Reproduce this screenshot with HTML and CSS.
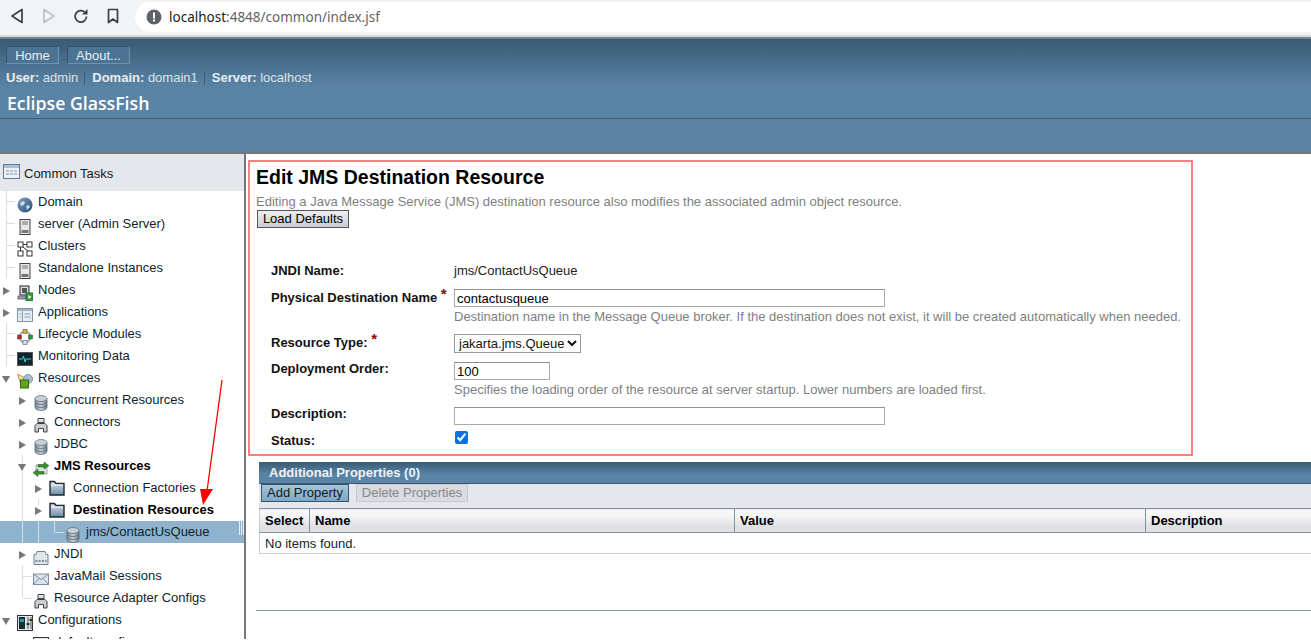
FILE: index.html
```html
<!DOCTYPE html>
<html lang="en">
<head>
  <meta charset="UTF-8">
  <title>Edit JMS Destination Resource</title>
  <link rel="stylesheet" href="styles.css">
</head>
<body>
  <svg class="defs" width="0" height="0">
    <defs>
      <linearGradient id="can" x1="0" x2="1" y1="0" y2="0"><stop offset="0" stop-color="#7d8c9c"/><stop offset=".5" stop-color="#c3ccd6"/><stop offset="1" stop-color="#6c7b8b"/></linearGradient>
      <linearGradient id="fold" x1="0" x2="0" y1="0" y2="1"><stop offset="0" stop-color="#dfe6ee"/><stop offset="1" stop-color="#6d8aa6"/></linearGradient>
      <linearGradient id="globe" x1="0" x2="1" y1="0" y2="1"><stop offset="0" stop-color="#7fa3c4"/><stop offset="1" stop-color="#234a72"/></linearGradient>
      <symbol id="i-globe" viewBox="0 0 16 16"><circle cx="8" cy="8" r="7.6" fill="url(#globe)"/><path d="M3 6l3-2 2 1-1 3-3 1zM9 9l3-1 1 2-3 3z" fill="#c7d8e8"/></symbol>
      <symbol id="i-server" viewBox="0 0 16 16"><rect x="3" y="0.5" width="10" height="15" fill="#e6e8ea" stroke="#444"/><path d="M5 3h6M5 5h6" stroke="#777"/><path d="M4.5 11h7v3h-7z" fill="#777"/></symbol>
      <symbol id="i-cluster" viewBox="0 0 16 16"><g fill="#fff" stroke="#333"><rect x="1" y="1" width="5" height="5"/><rect x="10" y="1" width="5" height="5"/><rect x="1" y="10" width="5" height="5"/><rect x="10" y="10" width="5" height="5"/></g><path d="M3.500 6v4M6 3.500h4M6 6l5 4" stroke="#333" fill="none"/></symbol>
      <symbol id="i-node" viewBox="0 0 16 16"><rect x="3" y="1" width="9" height="9" fill="#ddd" stroke="#222"/><rect x="5" y="3" width="5" height="5" fill="#555"/><rect x="1" y="11" width="8" height="3" fill="#a89cc0" stroke="#444" stroke-width=".7"/><rect x="9" y="8" width="7" height="8" fill="#3c9a3c" stroke="#174"/><path d="M11.500 10l3 2-3 2z" fill="#fff"/></symbol>
      <symbol id="i-apps" viewBox="0 0 16 16"><rect x="0.500" y="1.500" width="15" height="13" fill="#e8edf2" stroke="#8494a4"/><path d="M1 2h14v2H1z" fill="#9fb3c6"/><path d="M5.500 4v10M7.500 7h6M7.500 10h6M2.500 7h2M2.500 10h2" stroke="#8fa2b4"/></symbol>
      <symbol id="i-life" viewBox="0 0 16 16"><circle cx="8" cy="8" r="5.500" fill="none" stroke="#8a9aaa" stroke-width="1.400"/><rect x="6" y="0.500" width="4" height="4" fill="#eeaa22" stroke="#555" stroke-width=".6"/><rect x="0.500" y="6" width="4" height="4" fill="#cc2222" stroke="#555" stroke-width=".6"/><rect x="11.500" y="6" width="4" height="4" fill="#229933" stroke="#555" stroke-width=".6"/><rect x="6" y="11.500" width="4" height="4" fill="#dde4ee" stroke="#555" stroke-width=".6"/></symbol>
      <symbol id="i-monitor" viewBox="0 0 16 16"><rect x="0.500" y="1.500" width="15" height="13" fill="#10252c" stroke="#555"/><path d="M2 8h3.500l1-3 1.500 6 1-3h5" stroke="#39d8d8" fill="none"/></symbol>
      <symbol id="i-res" viewBox="0 0 16 16"><path d="M0.500 1l6 3 1 4-3 6z" fill="#f2d9a0" stroke="#c08a2a" stroke-width=".8"/><circle cx="11" cy="6" r="4.500" fill="#a9bccd" stroke="#6d8296" stroke-width=".8"/><rect x="3.500" y="7" width="8" height="8" fill="#62a020" stroke="#2f6a10"/></symbol>
      <symbol id="i-db" viewBox="0 0 16 16"><path d="M2 3.500v9c0 1.700 2.700 3 6 3s6-1.300 6-3v-9z" fill="url(#can)" stroke="#5d6b79" stroke-width=".7"/><path d="M2 6.500c0 1.700 2.700 3 6 3s6-1.300 6-3M2 9.500c0 1.700 2.700 3 6 3s6-1.300 6-3" fill="none" stroke="#55636f" stroke-width=".7"/><ellipse cx="8" cy="3.500" rx="6" ry="3" fill="#c6ced7" stroke="#5d6b79" stroke-width=".7"/></symbol>
      <symbol id="i-conn" viewBox="0 0 16 16"><path d="M5 1.500h6v4H5z" fill="#dfe4ea" stroke="#444"/><path d="M2 15V8.500l2-2h8l2 2V15h-3.500v-3.500h-5V15z" fill="#c6ced6" stroke="#444"/></symbol>
      <symbol id="i-jms" viewBox="0 0 16 16"><path d="M3 4h11v9H3z" fill="#dde3ea" stroke="#7b8a98" stroke-width=".7"/><path d="M5 3.500h6V1l5 3.700-5 3.300V6H5z" fill="#3c8f28" stroke="#1f5a14" stroke-width=".5"/><path d="M11 10.500H5V8l-5 3.700L5 15.500V13h6z" fill="#3c8f28" stroke="#1f5a14" stroke-width=".5"/></symbol>
      <symbol id="i-folder" viewBox="0 0 16 16"><path d="M1 1.500h4.500l1.500 2h8v11.500H1z" fill="url(#fold)" stroke="#1d2a36" stroke-width="1.400"/><path d="M2 5h12" stroke="#fff"/></symbol>
      <symbol id="i-jndi" viewBox="0 0 16 16"><path d="M4 2.500h8l1 3h2v10H1v-10h2z" fill="#e0e6ec" stroke="#6f7f8e"/><path d="M2.500 12h11" stroke="#7d8c9c" stroke-dasharray="2 1.200" stroke-width="2"/></symbol>
      <symbol id="i-mail" viewBox="0 0 16 16"><rect x="0.500" y="3" width="15" height="10.500" fill="#dce5ee" stroke="#7c8fa1"/><path d="M1 3.500l7 5 7-5M1 13l5-5.500M15 13l-5-5.500" fill="none" stroke="#7c8fa1"/></symbol>
      <symbol id="i-config" viewBox="0 0 16 16"><rect x="0.500" y="0.500" width="15" height="15" fill="#e4e6e8" stroke="#333"/><rect x="2" y="2" width="6" height="12" fill="#13303a"/><rect x="3" y="4" width="4" height="3" fill="#22a39a"/><path d="M11 2v12M14 2v12" stroke="#555"/><path d="M9.500 9h3M12.500 5h2.500" stroke="#333" stroke-width="2"/></symbol>
    </defs>
  </svg>

  <header class="browser-bar">
    <div class="nav-icons">
      <svg width="16" height="16" viewBox="0 0 16 16"><path d="M13 1.500v13L3 8z" fill="none" stroke="#3c4043" stroke-width="1.700" stroke-linejoin="round"/></svg>
      <svg width="16" height="16" viewBox="0 0 16 16"><path d="M3 1.500v13L13 8z" fill="none" stroke="#bdc1c6" stroke-width="1.700" stroke-linejoin="round"/></svg>
      <svg width="16" height="16" viewBox="0 0 16 16"><path d="M13.500 8.500a5.700 5.700 0 1 1-1.700-4.200" fill="none" stroke="#3c4043" stroke-width="1.700"/><path d="M14.500 1v5.500H9z" fill="#3c4043"/></svg>
      <svg width="16" height="16" viewBox="0 0 16 16"><path d="M3.500 1.500h9v13L8 11l-4.500 3.500z" fill="none" stroke="#3c4043" stroke-width="1.700" stroke-linejoin="round"/></svg>
    </div>
    <div class="url-box">
      <svg width="16" height="16" viewBox="0 0 16 16"><circle cx="8" cy="8" r="7.500" fill="#5f6368"/><path d="M7 3.500h2v6H7zM7 10.500h2v2H7z" fill="#fff"/></svg>
      <span class="url-host">localhost</span><span class="url-rest">:4848/common/index.jsf</span>
    </div>
  </header>

  <div class="masthead">
    <div class="mast-top">
      <div class="mast-nav">
        <button class="mast-btn mast-home">Home</button>
        <button class="mast-btn mast-about">About...</button>
      </div>
      <div class="mast-user">
        <span class="mast-item"><b>User:</b> admin</span>
        <span class="mast-item"><b>Domain:</b> domain1</span>
        <span class="mast-item"><b>Server:</b> localhost</span>
      </div>
      <div class="mast-title">Eclipse GlassFish</div>
    </div>
    <div class="mast-bottom"></div>
  </div>

  <div class="workspace">
    <nav class="sidebar">
      <div class="tasks-head">
        <svg width="17" height="15" viewBox="0 0 17 15"><rect x="0.500" y="0.500" width="16" height="14" fill="#eef2f6" stroke="#5f7d9a"/><path d="M1 1h15v3H1z" fill="#a9c0d6"/><path d="M3 7h3M7 7h3M11 7h3M3 10h3M7 10h3M11 10h3" stroke="#7d93a8"/></svg>
        Common Tasks
      </div>
      <ul class="tree">
        <li class="row lv1 vline1 stub"><svg class="ico"><use href="#i-globe"/></svg>Domain</li>
        <li class="row lv1 vline1 stub"><svg class="ico"><use href="#i-server"/></svg>server (Admin Server)</li>
        <li class="row lv1 vline1 stub"><svg class="ico"><use href="#i-cluster"/></svg>Clusters</li>
        <li class="row lv1 vline1 stub"><svg class="ico"><use href="#i-server"/></svg>Standalone Instances</li>
        <li class="row lv1"><i class="turner closed"></i><svg class="ico"><use href="#i-node"/></svg>Nodes</li>
        <li class="row lv1"><i class="turner closed"></i><svg class="ico"><use href="#i-apps"/></svg>Applications</li>
        <li class="row lv1 vline1 stub"><svg class="ico"><use href="#i-life"/></svg>Lifecycle Modules</li>
        <li class="row lv1 vline1 stub"><svg class="ico"><use href="#i-monitor"/></svg>Monitoring Data</li>
        <li class="row lv1"><i class="turner open"></i><svg class="ico"><use href="#i-res"/></svg>Resources</li>
        <li class="row lv2"><i class="turner closed"></i><svg class="ico"><use href="#i-db"/></svg>Concurrent Resources</li>
        <li class="row lv2"><i class="turner closed"></i><svg class="ico"><use href="#i-conn"/></svg>Connectors</li>
        <li class="row lv2"><i class="turner closed"></i><svg class="ico"><use href="#i-db"/></svg>JDBC</li>
        <li class="row lv2 vline2 bold"><i class="turner open"></i><svg class="ico"><use href="#i-jms"/></svg>JMS Resources</li>
        <li class="row lv3 vline2"><i class="turner closed"></i><svg class="ico ico-folder"><use href="#i-folder"/></svg>Connection Factories</li>
        <li class="row lv3 vline2 vline3 bold"><i class="turner closed"></i><svg class="ico ico-folder"><use href="#i-folder"/></svg>Destination Resources</li>
        <li class="row lv4 selected"><svg class="ico"><use href="#i-db"/></svg>jms/ContactUsQueue<span class="grip"></span></li>
        <li class="row lv2"><i class="turner closed"></i><svg class="ico"><use href="#i-jndi"/></svg>JNDI</li>
        <li class="row lv2 vline2 stub2"><svg class="ico"><use href="#i-mail"/></svg>JavaMail Sessions</li>
        <li class="row lv2 vline2 stub2 stub-end"><svg class="ico"><use href="#i-conn"/></svg>Resource Adapter Configs</li>
        <li class="row lv1"><i class="turner open"></i><svg class="ico"><use href="#i-config"/></svg>Configurations</li>
        <li class="row lv2"><i class="turner closed"></i><svg class="ico"><use href="#i-config"/></svg>default-config</li>
      </ul>
    </nav>

    <main class="content">
      <section class="edit-box">
        <h1>Edit JMS Destination Resource</h1>
        <p class="help page-help">Editing a Java Message Service (JMS) destination resource also modifies the associated admin object resource.</p>
        <button class="load-btn">Load Defaults</button>
        <div class="form">
          <div class="form-row row-jndi">
            <label>JNDI Name:</label>
            <div class="value">jms/ContactUsQueue</div>
          </div>
          <div class="form-row row-phys">
            <label>Physical Destination Name <span class="req">*</span></label>
            <div class="value">
              <input class="field wide" type="text" value="contactusqueue">
              <p class="help">Destination name in the Message Queue broker. If the destination does not exist, it will be created automatically when needed.</p>
            </div>
          </div>
          <div class="form-row row-type">
            <label>Resource Type: <span class="req">*</span></label>
            <div class="value">
              <select class="type-select"><option>jakarta.jms.Queue</option></select>
            </div>
          </div>
          <div class="form-row row-order">
            <label>Deployment Order:</label>
            <div class="value">
              <input class="field short" type="text" value="100">
              <p class="help">Specifies the loading order of the resource at server startup. Lower numbers are loaded first.</p>
            </div>
          </div>
          <div class="form-row row-desc">
            <label>Description:</label>
            <div class="value"><input class="field wide" type="text"></div>
          </div>
          <div class="form-row row-status">
            <label>Status:</label>
            <div class="value"><input class="status-check" type="checkbox" checked></div>
          </div>
        </div>
      </section>

      <section class="props">
        <div class="props-title">Additional Properties (0)</div>
        <div class="props-actions">
          <button class="add-btn">Add Property</button>
          <button class="del-btn" disabled>Delete Properties</button>
        </div>
        <table class="props-table">
          <colgroup>
            <col class="col-select"><col class="col-name"><col class="col-value"><col>
          </colgroup>
          <thead>
            <tr><th>Select</th><th>Name</th><th>Value</th><th>Description</th></tr>
          </thead>
          <tbody>
            <tr><td colspan="4">No items found.</td></tr>
          </tbody>
        </table>
      </section>
      <hr class="foot-rule">
    </main>
  </div>

  <svg class="annot" width="40" height="140" viewBox="0 0 40 140">
    <path d="M27 1L12 112" stroke="#f00" stroke-width="1.300" fill="none"/>
    <path d="M5 110h13L8 126z" fill="#f00"/>
  </svg>
</body>
</html>
```

FILE: styles.css
```css
* {
  box-sizing: border-box;
}
html, body {
  height: 100%;
}
body {
  margin: 0;
  overflow: hidden;
  background: #fff;
  color: #000;
  font-family: "Liberation Sans", Arial, sans-serif;
  font-size: 13px;
}
.defs {
  position: absolute;
}

/* browser chrome */
.browser-bar {
  display: flex;
  height: 37px;
  padding-top: 2px;
  background: #f1f3f4;
  border-bottom: 2px solid #d6d8da;
}
.nav-icons {
  display: flex;
  gap: 16px;
  width: 135px;
  padding: 6px 0 0 9px;
}
.url-box {
  display: flex;
  align-items: center;
  flex: 1;
  height: 30px;
  padding-left: 11px;
  background: #fff;
  border-radius: 15px 0 0 15px;
  font-family: "Noto Sans", sans-serif;
  font-size: 13.5px;
}
.url-box svg {
  margin-right: 7px;
}
.url-host {
  color: #202124;
}
.url-rest {
  color: #5f6368;
}

/* masthead */
.masthead {
  height: 115px;
  border-top: 2px solid #6f8596;
}
.mast-top {
  height: 80px;
  padding: 7px 6px 0;
  background: linear-gradient(#395b73, #5a84a6 62%);
  border-bottom: 1px solid #3c5b72;
}
.mast-bottom {
  height: 33px;
  background: #5a82a3;
}
.mast-nav {
  display: flex;
  gap: 8px;
}
.mast-btn {
  height: 18px;
  padding: 0;
  background: #4b7493;
  border: 1px solid #6f93ae;
  border-top-color: #34536b;
  border-left-color: #34536b;
  color: #e8eef3;
  font: 13px "Liberation Sans", Arial, sans-serif;
}
.mast-home {
  width: 53px;
}
.mast-about {
  width: 63px;
}
.mast-user {
  display: flex;
  margin-top: 5px;
  height: 17px;
  align-items: center;
  color: #dbe4ec;
}
.mast-user b {
  color: #e8edf2;
}
.mast-item {
  padding-right: 6px;
  margin-right: 7px;
  border-right: 1px solid #3f5e75;
  line-height: 14px;
}
.mast-item:last-child {
  border: 0;
}
.mast-title {
  margin: 5px 0 0 1px;
  color: #fff;
  font-family: "Open Sans", sans-serif;
  font-size: 17.7px;
  font-weight: 600;
  line-height: 24px;
}

/* left tree */
.workspace {
  display: flex;
  height: 487px;
  border-top: 2px solid #777;
}
.sidebar {
  flex: none;
  width: 246px;
  border-right: 2px solid #777;
  overflow: hidden;
}
.tasks-head {
  display: flex;
  align-items: center;
  gap: 4px;
  height: 37px;
  padding: 1px 0 0 3px;
  background: #e4e7ec;
  color: #1a1a1a;
}
.tasks-head svg {
  margin-top: -3px;
}
.tree {
  margin: 0;
  padding: 0;
  list-style: none;
  color: #0e1f2e;
}
.row {
  position: relative;
  display: flex;
  align-items: flex-start;
  height: 22px;
  line-height: 22px;
  white-space: nowrap;
}
.bold {
  font-weight: bold;
  color: #000;
}
.ico {
  flex: none;
  width: 16px;
  height: 16px;
  margin: 6px 5px 0 0;
}
.ico-folder {
  margin: 3px 8px 0 0;
}
.lv1 {
  padding-left: 17px;
}
.lv2 {
  padding-left: 33px;
}
.lv3 {
  padding-left: 49px;
}
.lv4 {
  padding-left: 65px;
}
.turner {
  position: absolute;
  top: 8px;
  width: 0;
  height: 0;
}
.lv1 .turner {
  left: 3px;
}
.lv2 .turner {
  left: 19px;
}
.lv3 .turner {
  left: 35px;
}
.turner.closed {
  border-left: 7px solid #777;
  border-top: 4px solid transparent;
  border-bottom: 4px solid transparent;
}
.turner.open {
  top: 9px;
  margin-left: -1px;
  border-top: 7px solid #777;
  border-left: 4px solid transparent;
  border-right: 4px solid transparent;
}

/* tree guide lines, painted behind the row */
.vline1.stub {
  background:
    linear-gradient(#ddd, #ddd) 6px 0 / 1px 100% no-repeat,
    linear-gradient(#ddd, #ddd) 7px 10px / 8px 1px no-repeat;
}
.vline2 {
  background: linear-gradient(#ddd, #ddd) 22px 0 / 1px 100% no-repeat;
}
.vline2.stub2 {
  background:
    linear-gradient(#ddd, #ddd) 22px 0 / 1px 100% no-repeat,
    linear-gradient(#ddd, #ddd) 23px 11px / 9px 1px no-repeat;
}
.vline2.stub2.stub-end {
  background:
    linear-gradient(#ddd, #ddd) 22px 0 / 1px 11px no-repeat,
    linear-gradient(#ddd, #ddd) 23px 11px / 9px 1px no-repeat;
}
.vline2.vline3 {
  background:
    linear-gradient(#ddd, #ddd) 22px 0 / 1px 100% no-repeat,
    linear-gradient(#ddd, #ddd) 38px 0 / 1px 6px no-repeat;
}
.row.selected {
  background:
    linear-gradient(#d4e0ea, #d4e0ea) 22px 0 / 1px 100% no-repeat,
    linear-gradient(#d4e0ea, #d4e0ea) 38px 0 / 1px 100% no-repeat,
    linear-gradient(#d4e0ea, #d4e0ea) 54px 0 / 1px 11px no-repeat,
    linear-gradient(#d4e0ea, #d4e0ea) 55px 11px / 9px 1px no-repeat,
    #8fb3cc;
  color: #0e1f2e;
}
.grip {
  position: absolute;
  top: 0;
  right: 0;
  width: 5px;
  height: 14px;
  border-left: 1px solid #e8eef3;
  border-right: 1px solid #e8eef3;
  background: linear-gradient(#e8eef3, #e8eef3) center / 1px 100% no-repeat;
}

/* content */
.content {
  flex: 1;
  min-width: 0;
  position: relative;
}
.edit-box {
  width: 945px;
  height: 296px;
  margin: 6px 0 0 2px;
  padding: 3px 6px 0;
  border: 2px solid #ff8080;
}
h1 {
  margin: 0;
  font-size: 19.5px;
  line-height: 24px;
  font-weight: bold;
}
.help {
  margin: 0;
  color: #7d7f82;
  font-size: 13px;
  line-height: 16px;
}
.page-help {
  margin-top: 5px;
}
.load-btn {
  display: block;
  width: 92px;
  height: 18px;
  margin: 0 0 0 1px;
  padding: 0 0 1px;
  background: linear-gradient(#eceef1, #c9cdd3);
  border: 1px solid #555;
  font: 13px "Liberation Sans", Arial, sans-serif;
  color: #000;
}
.form {
  margin-top: 33px;
  padding-left: 15px;
}
.form-row {
  display: grid;
  grid-template-columns: 183px 1fr;
}
.form-row label {
  font-weight: bold;
  color: #111;
  line-height: 16px;
  white-space: nowrap;
}
.req {
  position: relative;
  top: -3px;
  color: #990000;
  font-size: 15px;
  line-height: 10px;
}
.row-jndi {
  height: 28px;
  padding-top: 2px;
  color: #222;
}
.row-phys {
  height: 45px;
}
.row-phys label {
  padding-top: 1px;
}
.row-type {
  height: 28px;
}
.row-type label {
  padding-top: 1px;
}
.row-order {
  height: 45px;
}
.row-order label {
  margin-top: -1px;
}
.row-desc {
  height: 24px;
}
.row-desc label {
  margin-top: -1px;
}
.field {
  display: block;
  height: 18px;
  padding: 1px 2px;
  border: 1px solid #a9a9a9;
  border-top-color: #8f8f8f;
  font: 13px "Liberation Sans", Arial, sans-serif;
  color: #000;
  background: #fff;
}
.wide {
  width: 431px;
}
.short {
  width: 96px;
}
.field + .help {
  margin-top: 2px;
}
.type-select {
  display: block;
  width: 127px;
  height: 19px;
  padding: 0;
  background: #fff;
  border: 1px solid #999;
  font: 13px "Liberation Sans", Arial, sans-serif;
  color: #111;
}
.status-check {
  display: block;
  width: 13px;
  height: 13px;
  margin: 0 0 0 1px;
  accent-color: #0b6fe8;
}
.row-status label {
  padding-top: 2px;
}

/* additional properties table */
.props {
  margin: 6px 0 0 13px;
}
.props-title {
  height: 22px;
  padding-left: 10px;
  background: linear-gradient(#395b73, #5a84a6 60%);
  border-bottom: 1px solid #3c5b72;
  color: #eef2f5;
  font-weight: bold;
  line-height: 21px;
}
.props-actions {
  display: flex;
  gap: 7px;
  height: 24px;
  padding-left: 2px;
  background: #e4e7ec;
}
.add-btn, .del-btn {
  height: 18px;
  padding: 0 0 1px;
  font: 13px "Liberation Sans", Arial, sans-serif;
}
.add-btn {
  width: 88px;
  background: linear-gradient(#a6c4da, #7ea7c4);
  border: 1px solid #35556d;
  color: #0c1a26;
}
.del-btn {
  width: 112px;
  background: #d8dbdf;
  border: 1px solid #c6c9cd;
  color: #85888c;
}
.props-table {
  width: 100%;
  table-layout: fixed;
  border-collapse: collapse;
  border-bottom: 1px solid #cfd2d4;
}
.col-select {
  width: 50px;
}
.col-name {
  width: 425px;
}
.col-value {
  width: 411px;
}
.props-table th {
  height: 24px;
  padding: 0 5px;
  text-align: left;
  font-size: 13px;
  background: linear-gradient(#f8f8f9, #f4f4f5 30%, #dfe0e4 75%);
  border: 1px solid #7f929f;
}
.props-table th:first-child {
  border-left-color: #c8ccce;
}
.props-table th:last-child {
  border-right: 0;
}
.props-table td {
  height: 21px;
  padding: 0 5px;
  color: #0e1f2e;
  border-left: 1px solid #c8ccce;
}
.foot-rule {
  height: 1px;
  margin: 56px 0 0 10px;
  border: 0;
  background: #8a9aa3;
}

/* red arrow drawn over the tree */
.annot {
  position: absolute;
  left: 195px;
  top: 379px;
}
```
